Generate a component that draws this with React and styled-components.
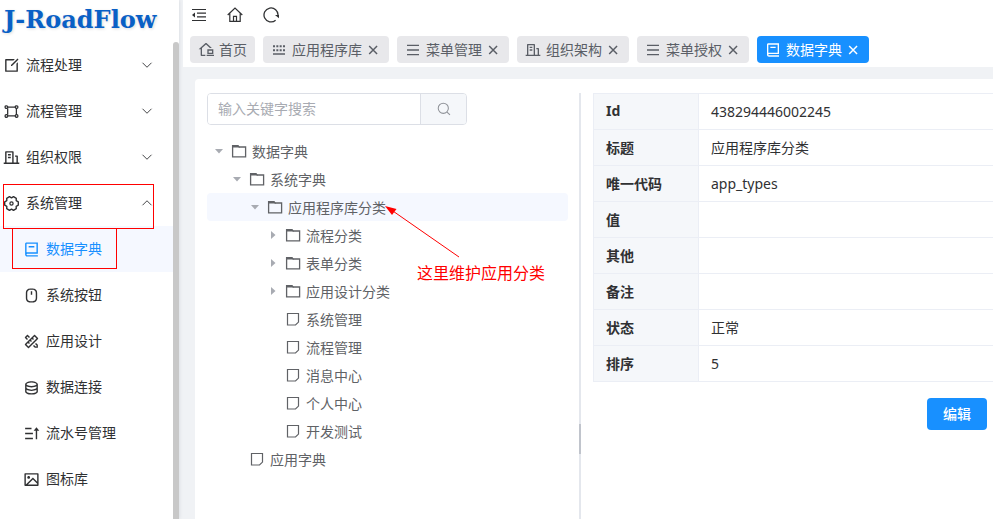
import React, { useState } from "react";
import styled, { createGlobalStyle } from "styled-components";
import {
  RiBook2Line,
  RiBuildingLine,
  RiDatabase2Line,
  RiEditBoxLine,
  RiHomeOfficeLine,
  RiImageLine,
  RiKeyboardLine,
  RiMenuLine,
  RiMouseLine,
  RiPencilRuler2Line,
  RiSortAsc,
} from "react-icons/ri";

const GlobalStyle = createGlobalStyle`
  * {
    box-sizing: border-box;
  }

  body {
    margin: 0;
    font-family: "Noto Sans", "Noto Sans CJK SC", sans-serif;
    font-size: 14px;
    color: #303133;
    overflow: hidden;
  }

  button, input {
    font: inherit;
  }
`;

// Page frame
const Layout = styled.div`
  display: flex;
  height: 100vh;
  overflow: hidden;
  background: #f0f2f5;
`;

const Sidebar = styled.aside`
  flex: none;
  width: 179px;
  display: flex;
  flex-direction: column;
  background: #fff;
  box-shadow: 0 0 4px rgba(0, 21, 41, 0.12);
  z-index: 1;
`;

const Logo = styled.div`
  flex: none;
  height: 42px;
  padding-left: 4px;
  line-height: 40px;
  font-family: "DejaVu Serif", serif;
  font-size: 24px;
  font-weight: 700;
  color: #0960c6;
  white-space: nowrap;
  text-shadow: 1px 1px 3px rgba(0, 0, 0, 0.15);
`;

const MenuScroll = styled.div`
  flex: 1;
  min-height: 0;
  display: flex;
`;

const Menu = styled.nav`
  flex: 1;
`;

const ScrollThumb = styled.div`
  width: 6px;
  border-radius: 3px 3px 0 0;
  background: #c8c8c8;
`;

const MenuItem = styled.a`
  position: relative;
  display: flex;
  align-items: center;
  gap: 6px;
  height: 46px;
  padding: 0 20px 0 ${(props) => (props.$sub ? 23 : 3)}px;
  color: ${(props) => (props.$active ? "#1890ff" : "#303133")};
  background: ${(props) => (props.$active ? "#f5f8ff" : "transparent")};
  text-decoration: none;
  white-space: nowrap;

  svg {
    flex: none;
  }
`;

const MenuLabel = styled.span`
  flex: 1;
  padding-bottom: 2px;
`;

const MenuMark = styled.span`
  position: absolute;
  top: ${(props) => (props.$sub ? 2 : 4)}px;
  left: ${(props) => (props.$sub ? 12 : 3)}px;
  width: ${(props) => (props.$sub ? 105 : 151)}px;
  height: ${(props) => (props.$sub ? 41 : 45)}px;
  border: 1px solid #f00;
  z-index: 1;
`;

const Main = styled.div`
  flex: 1;
  min-width: 0;
  display: flex;
  flex-direction: column;
  padding-left: 4px;
`;

const Header = styled.header`
  flex: none;
  background: #fff;
`;

const Toolbar = styled.div`
  display: flex;
  align-items: center;
  gap: 20px;
  height: 30px;
  padding-left: 8px;
`;

const ToolButton = styled.button`
  display: flex;
  padding: 0;
  border: none;
  background: none;
  color: #303133;
`;

const Tabs = styled.div`
  display: flex;
  gap: 8px;
  padding: 6px 7px 4px;
`;

const Tab = styled.button`
  flex: none;
  display: flex;
  align-items: center;
  gap: 5px;
  height: 27px;
  padding: 0 8px;
  border: none;
  border-radius: 4px;
  background: ${(props) => (props.$active ? "#1890ff" : "#e8e8eb")};
  color: ${(props) => (props.$active ? "#fff" : "#5a5e66")};
  white-space: nowrap;
`;

const TabLabel = styled.span`
  padding-bottom: 2px;
`;

const Content = styled.main`
  flex: 1;
  min-height: 0;
  display: flex;
  margin: 12px 0 0 12px;
  padding: 14px 0 0 12px;
  border-radius: 4px 0 0 0;
  background: #fff;
`;

// Dictionary tree
const TreePanel = styled.section`
  flex: none;
  width: 361px;
`;

const SearchBox = styled.form`
  display: flex;
  width: 260px;
  height: 32px;
  margin-bottom: 12px;
  border: 1px solid #dcdfe6;
  border-radius: 4px;
  overflow: hidden;
`;

const SearchInput = styled.input`
  flex: 1;
  min-width: 0;
  padding: 0 10px 2px;
  border: none;
  outline: none;
  color: #606266;

  &::placeholder {
    color: #a8abb2;
  }
`;

const SearchButton = styled.button`
  display: flex;
  align-items: center;
  justify-content: center;
  width: 46px;
  border: none;
  border-left: 1px solid #dcdfe6;
  background: #f5f7fa;
  color: #909399;
`;

const TreeRow = styled.div`
  position: relative;
  display: flex;
  align-items: center;
  height: 28px;
  padding-left: ${(props) => props.$level * 18}px;
  border-radius: 4px;
  background: ${(props) => (props.$active ? "#f5f8ff" : "transparent")};
  color: #606266;
  white-space: nowrap;
`;

const Caret = styled.span`
  display: flex;
  justify-content: center;
  width: 24px;
  color: #a8abb2;
`;

const TreeLabel = styled.span`
  margin-left: 5px;
`;

const Note = styled.div`
  position: absolute;
  top: 12px;
  left: 176px;
  display: flex;
  flex-direction: column;
  padding-left: 1px;
  z-index: 2;
`;

const NoteText = styled.span`
  padding-left: 33px;
  font-family: "Noto Sans CJK SC", sans-serif;
  font-size: 16px;
  line-height: 26px;
  color: #f00;
`;

const Splitter = styled.div`
  flex: none;
  display: flex;
  align-items: center;
  width: 2px;
  margin: 0 12px 0 11px;
  padding-top: 266px;
  background: #e4e7ed;
`;

const SplitterHandle = styled.div`
  width: 2px;
  height: 30px;
  background: #c0c4cc;
`;

// Details
const Detail = styled.section`
  flex: 1;
  min-width: 0;
`;

const DetailTable = styled.table`
  width: 100%;
  border-collapse: collapse;
  table-layout: fixed;
`;

const cellBorder = "1px solid #ebeef5";

const LabelCell = styled.th`
  width: 105px;
  height: 36px;
  padding: 0 12px 2px;
  border: ${cellBorder};
  background: #f5f7fa;
  font-weight: 700;
  text-align: left;
`;

const ValueCell = styled.td`
  padding: 0 12px 1px;
  border: ${cellBorder};
  border-right: none;
`;

const Actions = styled.div`
  display: flex;
  justify-content: flex-end;
  padding: 16px 6px 0 0;
`;

const PrimaryButton = styled.button`
  height: 32px;
  padding: 0 16px 2px;
  border: none;
  border-radius: 4px;
  background: #1890ff;
  color: #fff;
  font-weight: 500;
`;

const Icon = ({ size = 16, children }) => (
  <svg
    width={size}
    height={size}
    viewBox="0 0 16 16"
    fill="none"
    stroke="currentColor"
    strokeWidth="1.2"
  >
    {children}
  </svg>
);

const FoldIcon = () => (
  <Icon>
    <path d="M1 2.5h14M6 6.2h9M6 9.8h9M1 13.5h14" />
    <path d="M1 8l3-2.5v5z" fill="currentColor" stroke="none" />
  </Icon>
);

const HouseIcon = () => (
  <Icon>
    <path d="M.7 8L8 1l7.3 7M2.8 6.5V14.4h10.4V6.5M6.5 14.4V9.3h3v5.1" />
  </Icon>
);

const RefreshIcon = () => (
  <Icon>
    <path d="M12.6 13.2A7 7 0 1 1 15 8.4" strokeWidth="1.3" />
    <path d="M12 8h4v3.2z" fill="currentColor" stroke="none" />
  </Icon>
);

const FlowIcon = ({ size }) => (
  <Icon size={size}>
    <rect x="2" y="2.6" width="2.4" height="2.4" rx="1" />
    <rect x="11.6" y="2.6" width="2.4" height="2.4" rx="1" />
    <rect x="2" y="11" width="2.4" height="2.4" rx="1" />
    <rect x="11.6" y="11" width="2.4" height="2.4" rx="1" />
    <path d="M4.4 3.8h7.2M12.6 5v6M4.4 12.2h7.2M4.4 5v6" />
  </Icon>
);

const GearIcon = ({ size }) => (
  <Icon size={size}>
    <path
      d="M14.4 6.4v3.2l-2 1.1.1 2.2-2.6 1.6L8 13.3l-1.9 1.2-2.6-1.6.1-2.2-2-1.1V6.4l2-1.1-.1-2.2 2.6-1.6L8 2.7l1.9-1.2 2.6 1.6-.1 2.2z"
      strokeLinejoin="round"
      strokeWidth="1.3"
    />
    <circle cx="8" cy="8" r="1.5" />
  </Icon>
);

const FolderIcon = () => (
  <Icon>
    <path d="M1.6 2.6v11.3h13V4H8.2L6.8 2.6z" strokeWidth="1.3" />
    <path d="M1 2h6l2 2.6H1z" fill="currentColor" stroke="none" />
  </Icon>
);

const FileIcon = () => (
  <Icon>
    <path d="M2.5 2.5h11v8.6l-3 2.9h-8z" />
  </Icon>
);

const SearchIcon = () => (
  <Icon size={14}>
    <circle cx="7.2" cy="7.2" r="5.8" />
    <path d="M11.5 11.5l3.3 3.3" />
  </Icon>
);

const CloseIcon = () => (
  <Icon size={14}>
    <path d="M2.5 3.5l9 9M11.5 3.5l-9 9" strokeWidth="1.7" />
  </Icon>
);

const ChevronIcon = ({ up }) => (
  <Icon size={12}>
    <path d={up ? "M2 11l6-6 6 6" : "M2 5l6 6 6-6"} />
  </Icon>
);

const menus = [
  { label: "流程处理", icon: RiEditBoxLine },
  { label: "流程管理", icon: FlowIcon },
  { label: "组织权限", icon: RiBuildingLine },
  { label: "系统管理", icon: GearIcon, open: true, marked: true },
  { label: "数据字典", icon: RiBook2Line, sub: true, active: true, marked: true },
  { label: "系统按钮", icon: RiMouseLine, sub: true },
  { label: "应用设计", icon: RiPencilRuler2Line, sub: true },
  { label: "数据连接", icon: RiDatabase2Line, sub: true },
  { label: "流水号管理", icon: RiSortAsc, sub: true },
  { label: "图标库", icon: RiImageLine, sub: true },
];

const tabs = [
  { label: "首页", icon: RiHomeOfficeLine, plain: true },
  { label: "应用程序库", icon: RiKeyboardLine },
  { label: "菜单管理", icon: RiMenuLine },
  { label: "组织架构", icon: RiBuildingLine },
  { label: "菜单授权", icon: RiMenuLine },
  { label: "数据字典", icon: RiBook2Line, active: true },
];

const nodes = [
  { label: "数据字典", level: 0, state: "open" },
  { label: "系统字典", level: 1, state: "open" },
  { label: "应用程序库分类", level: 2, state: "open", active: true },
  { label: "流程分类", level: 3, state: "closed" },
  { label: "表单分类", level: 3, state: "closed" },
  { label: "应用设计分类", level: 3, state: "closed" },
  { label: "系统管理", level: 3 },
  { label: "流程管理", level: 3 },
  { label: "消息中心", level: 3 },
  { label: "个人中心", level: 3 },
  { label: "开发测试", level: 3 },
  { label: "应用字典", level: 1 },
];

const details = [
  ["Id", "438294446002245"],
  ["标题", "应用程序库分类"],
  ["唯一代码", "app_types"],
  ["值", ""],
  ["其他", ""],
  ["备注", ""],
  ["状态", "正常"],
  ["排序", "5"],
];

const TreeNode = ({ node }) => (
  <TreeRow $level={node.level} $active={node.active}>
    <Caret>
      {node.state && (
        <svg width="8" height="8" viewBox="0 0 8 8" fill="currentColor">
          <path d={node.state === "open" ? "M0 2h8L4 6.5z" : "M2 0v8l4.5-4z"} />
        </svg>
      )}
    </Caret>
    {node.state ? <FolderIcon /> : <FileIcon />}
    <TreeLabel>{node.label}</TreeLabel>
    {node.active && (
      <Note>
        <svg width="78" height="54" viewBox="0 0 78 54">
          <path d="M6 4l69 48" stroke="#f00" strokeWidth="1" />
          <path d="M1 1l11.5 3-4.5 6z" fill="#f00" />
        </svg>
        <NoteText>这里维护应用分类</NoteText>
      </Note>
    )}
  </TreeRow>
);

const App = () => {
  const [keyword, setKeyword] = useState("");

  return (
    <Layout>
      <GlobalStyle />
      <Sidebar>
        <Logo>J-RoadFlow</Logo>
        <MenuScroll>
          <Menu>
            {menus.map((item) => (
              <MenuItem key={item.label} href="#" $sub={item.sub} $active={item.active}>
                <item.icon size={17} />
                <MenuLabel>{item.label}</MenuLabel>
                {!item.sub && <ChevronIcon up={item.open} />}
                {item.marked && <MenuMark $sub={item.sub} />}
              </MenuItem>
            ))}
          </Menu>
          <ScrollThumb />
        </MenuScroll>
      </Sidebar>
      <Main>
        <Header>
          <Toolbar>
            <ToolButton aria-label="折叠菜单">
              <FoldIcon />
            </ToolButton>
            <ToolButton aria-label="主页">
              <HouseIcon />
            </ToolButton>
            <ToolButton aria-label="刷新">
              <RefreshIcon />
            </ToolButton>
          </Toolbar>
          <Tabs>
            {tabs.map((tab) => (
              <Tab key={tab.label} $active={tab.active}>
                <tab.icon size={16} />
                <TabLabel>{tab.label}</TabLabel>
                {!tab.plain && <CloseIcon />}
              </Tab>
            ))}
          </Tabs>
        </Header>
        <Content>
          <TreePanel>
            <SearchBox onSubmit={(e) => e.preventDefault()}>
              <SearchInput
                aria-label="关键字"
                placeholder="输入关键字搜索"
                value={keyword}
                onChange={(e) => setKeyword(e.target.value)}
              />
              <SearchButton aria-label="搜索">
                <SearchIcon />
              </SearchButton>
            </SearchBox>
            {nodes.map((node, index) => (
              <TreeNode key={index} node={node} />
            ))}
          </TreePanel>
          <Splitter>
            <SplitterHandle />
          </Splitter>
          <Detail>
            <DetailTable>
              <tbody>
                {details.map(([label, value]) => (
                  <tr key={label}>
                    <LabelCell scope="row">{label}</LabelCell>
                    <ValueCell>{value}</ValueCell>
                  </tr>
                ))}
              </tbody>
            </DetailTable>
            <Actions>
              <PrimaryButton>编辑</PrimaryButton>
            </Actions>
          </Detail>
        </Content>
      </Main>
    </Layout>
  );
};

export default App;
